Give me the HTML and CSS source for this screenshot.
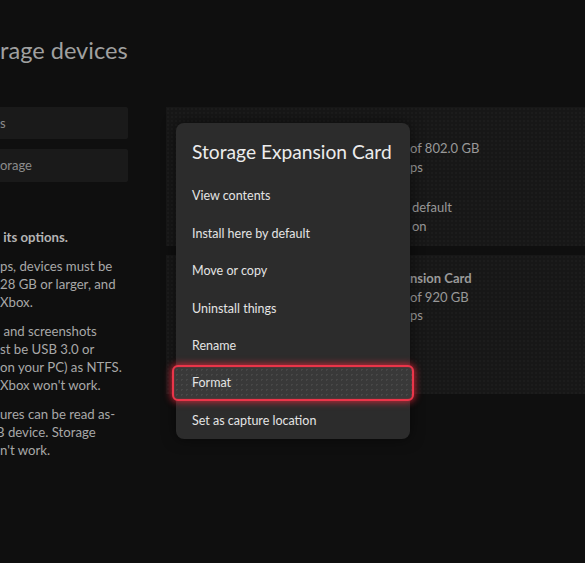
FILE: index.html
```html
<!DOCTYPE html>
<html lang="en">
<head>
<meta charset="utf-8">
<title>Storage devices</title>
<link rel="stylesheet" href="styles.css">
</head>
<body>
<div class="page">
  <header class="header">
    <h1 class="title">rage devices</h1>
  </header>
  <div class="main">
    <aside class="side">
      <div class="nav-item">s</div>
      <div class="nav-item nav-item-2">orage</div>
      <div class="help">
        <p class="help-lead"><span class="ln"> its options.</span></p>
        <p class="help-para"><span class="ln">ps, devices must be</span><span class="ln">28 GB or larger, and</span><span class="ln">Xbox.</span></p>
        <p class="help-para"><span class="ln"> and screenshots</span><span class="ln">st be USB 3.0 or</span><span class="ln">on your PC) as NTFS.</span><span class="ln">Xbox won't work.</span></p>
        <p class="help-para"><span class="ln">ures can be read as-</span><span class="ln cut">B device. Storage</span><span class="ln">n't work.</span></p>
      </div>
    </aside>
    <section class="cards">
      <div class="card card-1">
        <div class="group"><span class="ln">of 802.0 GB</span><span class="ln">ps</span></div>
        <div class="group group-2"><span class="ln">default</span><span class="ln">on</span></div>
      </div>
      <div class="card card-2">
        <div class="group"><span class="ln strong">nsion Card</span><span class="ln">of 920 GB</span><span class="ln">ps</span></div>
      </div>
    </section>
  </div>

  <div class="menu">
    <div class="menu-title">Storage Expansion Card</div>
    <ul class="menu-list">
      <li class="menu-item">View contents</li>
      <li class="menu-item">Install here by default</li>
      <li class="menu-item">Move or copy</li>
      <li class="menu-item">Uninstall things</li>
      <li class="menu-item">Rename</li>
      <li class="menu-item is-focused">Format</li>
      <li class="menu-item">Set as capture location</li>
    </ul>
  </div>
</div>
</body>
</html>
```

FILE: styles.css
```css
* { box-sizing: border-box; }

html, body {
  margin: 0;
  padding: 0;
  background: #0f0f0f;
  width: 585px;
  height: 563px;
  overflow: hidden;
}

body {
  font-family: Lato, "Noto Sans", sans-serif;
  color: #9a9a9a;
}

.page {
  position: relative;
  width: 585px;
  height: 563px;
}

.header {
  padding-top: 34px;
  height: 107px;
}

.title {
  margin: 0;
  font-size: 23.6px;
  line-height: 32px;
  font-weight: 400;
  color: #a0a0a0;
  white-space: nowrap;
}

.main {
  display: flex;
  gap: 38px;
}

.side {
  width: 128px;
  flex: none;
}

.nav-item {
  height: 32px;
  background: #1a1a1a;
  font-size: 13px;
  line-height: 32px;
  color: #8c8c8c;
  border-radius: 0 2px 2px 0;
}

.nav-item-2 {
  margin-top: 10px;
  height: 33px;
  line-height: 33px;
}

.help {
  margin-top: 47px;
  font-size: 13.2px;
  line-height: 17.9px;
  color: #a8a8a8;
}

.help p { margin: 0; }

.help-lead {
  font-weight: 700;
  color: #b4b4b4;
}

.help .help-para { margin-top: 11.2px; }

.ln { display: block; white-space: pre; }

.cut { text-indent: -4px; }

.cards {
  flex: 1;
  display: flex;
  flex-direction: column;
  gap: 9px;
}

.card {
  height: 139px;
  background: #171717;
  background-image: radial-gradient(rgba(255,255,255,0.025) 1px, transparent 1px);
  background-size: 4px 4px;
  padding-left: 244px;
  font-size: 13px;
  color: #999;
  white-space: nowrap;
}

.card-1 { padding-top: 31.5px; line-height: 19px; }
.card-2 { padding-top: 14px; line-height: 18.5px; }

.group-2 { margin-top: 21px; padding-left: 2px; }

.strong { font-weight: 700; color: #9a9a9a; }

.menu {
  position: absolute;
  left: 176px;
  top: 123px;
  width: 234px;
  height: 316px;
  background: #2c2c2c;
  border-radius: 8px;
  box-shadow: 0 0 14px rgba(0,0,0,0.55);
  color: #e6e6e6;
}

.menu-title {
  padding: 15px 16px 0;
  height: 54px;
  font-size: 19.2px;
  line-height: 28px;
  white-space: nowrap;
  color: #ececec;
}

.menu-list {
  list-style: none;
  margin: 0;
  padding: 0;
}

.menu-item {
  height: 37.5px;
  line-height: 38px;
  padding: 0 16px;
  font-size: 12.5px;
  color: #e4e4e4;
  white-space: nowrap;
}

.menu-item.is-focused {
  height: 36px;
  line-height: 31px;
  margin: 0.75px -4px;
  padding: 0 18px;
  border: 2.5px solid #ea3549;
  border-radius: 6px;
  background-color: #393939;
  background-image: radial-gradient(rgba(255,255,255,0.07) 1px, transparent 1px);
  background-size: 5px 5px;
  box-shadow: 0 0 7px 1px rgba(235, 40, 60, 0.8), inset 0 0 2px rgba(230,40,60,0.5);
}
```
